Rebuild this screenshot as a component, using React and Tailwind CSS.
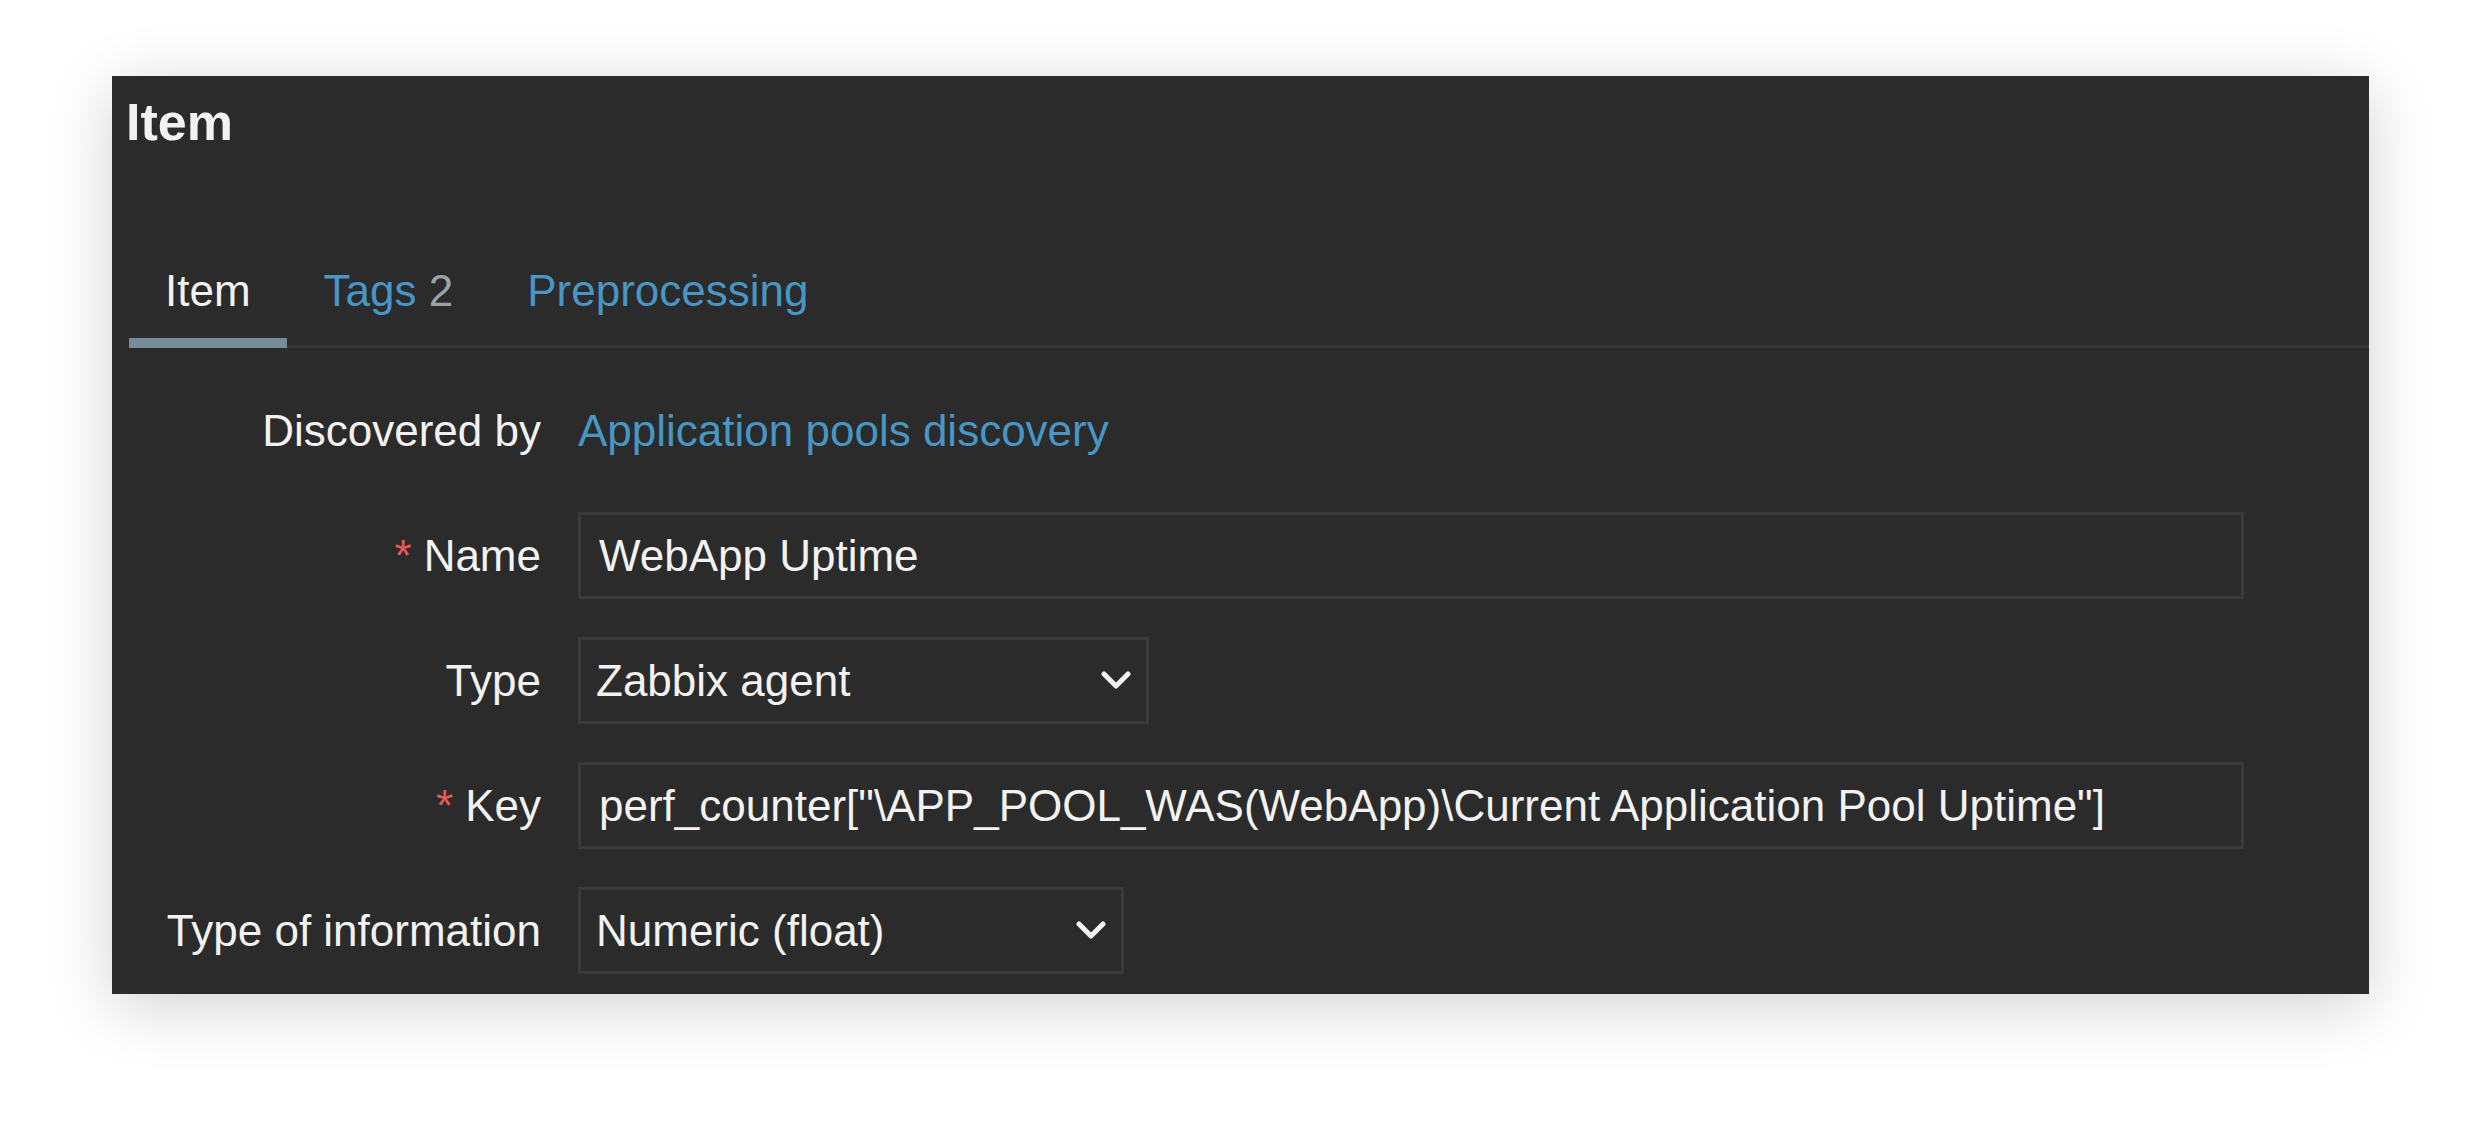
import React from 'react';

const FONT = { fontFamily: '"Liberation Sans", Arial, sans-serif' };

const Chevron = () => (
  <svg width="30" height="19" viewBox="0 0 30 19" fill="none" className="shrink-0">
    <polyline
      points="3,3 15,15 27,3"
      stroke="#f2f2f2"
      strokeWidth="5"
      strokeLinecap="round"
      strokeLinejoin="round"
    />
  </svg>
);

const Label = ({ children, required }) => (
  <div className="flex items-center justify-end whitespace-nowrap text-[44px] leading-[51px] text-[#f2f2f2]">
    {required && <span className="mr-[12px] text-[#e45959]">*</span>}
    {children}
  </div>
);

const TextInput = ({ value }) => (
  <div className="flex h-[87px] w-[1666px] items-center border-[3px] border-[#3a3a3a] bg-[#2b2b2b] px-[18px] text-[44px] leading-[51px] whitespace-nowrap text-[#f2f2f2]">
    {value}
  </div>
);

const Select = ({ value, width }) => (
  <div
    className={`flex h-[87px] items-center justify-between border-[3px] border-[#3a3a3a] bg-[#2b2b2b] px-[15px] text-[44px] leading-[51px] whitespace-nowrap text-[#f2f2f2] ${width}`}
  >
    <span>{value}</span>
    <Chevron />
  </div>
);

const Row = ({ label, required, children }) => (
  <div className="grid h-[87px] grid-cols-[413px_1fr] items-center gap-x-[37px]">
    <Label required={required}>{label}</Label>
    <div className="flex items-center">{children}</div>
  </div>
);

export default function App() {
  return (
    <div className="min-h-screen bg-white pl-[112px] pt-[76px]" style={FONT}>
      <div className="w-[2257px] bg-[#2b2b2b] pb-[20px] pt-[12px] shadow-[0_12px_60px_rgba(0,0,0,0.18)]">
        {/* Header */}
        <h1 className="pl-[14px] pt-[4px] text-[52px] font-bold leading-[60px] text-[#f2f2f2]">Item</h1>

        {/* Tabs */}
        <div className="ml-[17px] mt-[91px] flex border-b-[3px] border-[#383838]">
          <div className="-mb-[3px] border-b-[10px] border-[#768d99] px-[36px] py-[22px] text-[44px] leading-[51px] text-[#f2f2f2]">
            Item
          </div>
          <div className="px-[37px] py-[22px] text-[44px] leading-[51px] text-[#4796c4]">
            Tags <span className="text-[#9aa3a8]">2</span>
          </div>
          <div className="px-[37px] py-[22px] text-[44px] leading-[51px] text-[#4796c4]">
            Preprocessing
          </div>
        </div>

        {/* Form */}
        <div className="mt-[39px] flex flex-col gap-[38px] pl-[16px]">
          <Row label="Discovered by">
            <span className="text-[44px] leading-[51px] text-[#4796c4]">Application pools discovery</span>
          </Row>
          <Row label="Name" required>
            <TextInput value="WebApp Uptime" />
          </Row>
          <Row label="Type">
            <Select value="Zabbix agent" width="w-[571px]" />
          </Row>
          <Row label="Key" required>
            <TextInput value={'perf_counter["\\APP_POOL_WAS(WebApp)\\Current Application Pool Uptime"]'} />
          </Row>
          <Row label="Type of information">
            <Select value="Numeric (float)" width="w-[546px]" />
          </Row>
        </div>
      </div>
    </div>
  );
}
